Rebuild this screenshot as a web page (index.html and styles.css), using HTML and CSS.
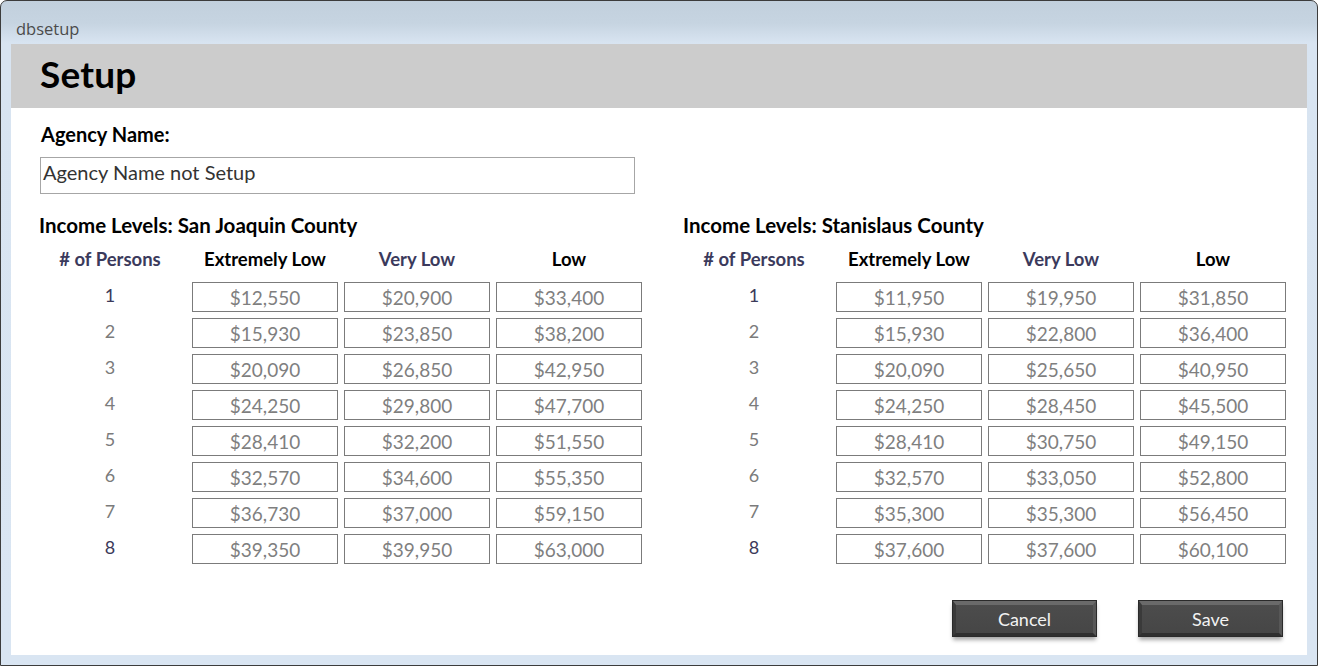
FILE: index.html
```
<!DOCTYPE html>
<html>
<head>
<meta charset="utf-8">
<link rel="stylesheet" href="styles.css">
</head>
<body>
<div class="window">
  <div class="titlebar">dbsetup</div>
  <div class="client">
    <div class="header"><h1 class="title">Setup</h1></div>
    <div class="content">
      <div class="label">Agency Name:</div>
      <div class="agency-input">Agency Name not Setup</div>
      <div class="sections">
        <div class="section">
          <div class="section-title">Income Levels: San Joaquin County</div>
          <div class="grid">
            <div class="colhead dim">#&nbsp;of Persons</div>
            <div class="colhead">Extremely Low</div>
            <div class="colhead dim">Very Low</div>
            <div class="colhead">Low</div>

            <div class="num dark">1</div><div class="cell">$12,550</div><div class="cell">$20,900</div><div class="cell">$33,400</div>
            <div class="num">2</div><div class="cell">$15,930</div><div class="cell">$23,850</div><div class="cell">$38,200</div>
            <div class="num">3</div><div class="cell">$20,090</div><div class="cell">$26,850</div><div class="cell">$42,950</div>
            <div class="num">4</div><div class="cell">$24,250</div><div class="cell">$29,800</div><div class="cell">$47,700</div>
            <div class="num">5</div><div class="cell">$28,410</div><div class="cell">$32,200</div><div class="cell">$51,550</div>
            <div class="num">6</div><div class="cell">$32,570</div><div class="cell">$34,600</div><div class="cell">$55,350</div>
            <div class="num">7</div><div class="cell">$36,730</div><div class="cell">$37,000</div><div class="cell">$59,150</div>
            <div class="num dark">8</div><div class="cell">$39,350</div><div class="cell">$39,950</div><div class="cell">$63,000</div>
          </div>
        </div>
        <div class="section">
          <div class="section-title">Income Levels: Stanislaus County</div>
          <div class="grid">
            <div class="colhead dim">#&nbsp;of Persons</div>
            <div class="colhead">Extremely Low</div>
            <div class="colhead dim">Very Low</div>
            <div class="colhead">Low</div>

            <div class="num dark">1</div><div class="cell">$11,950</div><div class="cell">$19,950</div><div class="cell">$31,850</div>
            <div class="num">2</div><div class="cell">$15,930</div><div class="cell">$22,800</div><div class="cell">$36,400</div>
            <div class="num">3</div><div class="cell">$20,090</div><div class="cell">$25,650</div><div class="cell">$40,950</div>
            <div class="num">4</div><div class="cell">$24,250</div><div class="cell">$28,450</div><div class="cell">$45,500</div>
            <div class="num">5</div><div class="cell">$28,410</div><div class="cell">$30,750</div><div class="cell">$49,150</div>
            <div class="num">6</div><div class="cell">$32,570</div><div class="cell">$33,050</div><div class="cell">$52,800</div>
            <div class="num">7</div><div class="cell">$35,300</div><div class="cell">$35,300</div><div class="cell">$56,450</div>
            <div class="num dark">8</div><div class="cell">$37,600</div><div class="cell">$37,600</div><div class="cell">$60,100</div>
          </div>
        </div>
      </div>
      <div class="buttons">
        <button class="btn">Cancel</button>
        <button class="btn">Save</button>
      </div>
    </div>
  </div>
</div>
</body>
</html>
```
FILE: styles.css
```
* { box-sizing: border-box; }
html, body { margin: 0; padding: 0; background: #ffffff; }
body { width: 1318px; height: 666px; overflow: hidden; font-family: Lato, "Open Sans", sans-serif; }

.window {
  width: 1318px;
  height: 666px;
  border: 1px solid #3c3c3c;
  border-radius: 7px 7px 0 0;
  background: linear-gradient(to bottom, #c2d0dd 0px, #c6d4e1 22px, #d8e4f1 42px, #d9e5f2 100%);
  padding: 0 10px 10px 10px;
  display: flex;
  flex-direction: column;
}

.titlebar {
  height: 43px;
  padding: 17px 0 0 5px;
  font-family: "Open Sans", sans-serif;
  font-size: 16.5px;
  line-height: 22px;
  color: #4b4b4b;
}

.client {
  flex: 1;
  background: #ffffff;
  display: flex;
  flex-direction: column;
}

.header {
  height: 64px;
  background: #cccccc;
  padding: 0 0 0 29px;
  display: flex;
  align-items: center;
}

.title {
  margin: 0;
  font-size: 37px;
  font-weight: 700;
  color: #000;
  line-height: 40px;
  padding-bottom: 4px;
  letter-spacing: 0.2px;
}

.content {
  flex: 1;
  padding: 13px 24px 0 29px;
  display: flex;
  flex-direction: column;
}

.label {
  font-size: 20px;
  font-weight: 700;
  line-height: 26px;
  color: #000;
  padding-left: 1px;
}

.agency-input {
  margin-top: 10px;
  width: 595px;
  height: 37px;
  border: 1px solid #a6a6a6;
  font-size: 20px;
  line-height: 28px;
  padding: 0 0 0 2px;
  color: #333333;
}

.sections {
  margin-top: 18px;
  display: flex;
  gap: 44px;
}

.section { width: 600px; }

.section-title {
  font-size: 20.5px;
  font-weight: 700;
  line-height: 26px;
  color: #000;
  margin-left: -1px;
}

.grid {
  margin-top: 7px;
  display: grid;
  grid-template-columns: 146px 146px 146px 146px;
  column-gap: 6px;
  row-gap: 6px;
  grid-auto-rows: 30px;
}

.colhead {
  font-size: 18.5px;
  font-weight: 700;
  text-align: center;
  line-height: 28px;
  color: #000;
  margin-bottom: -4px;
}
.colhead.dim { color: #3b3a5c; }
.grid > .colhead:first-child { padding-right: 6px; }

.num {
  font-size: 18px;
  text-align: center;
  line-height: 28px;
  padding-right: 6px;
  color: #7b7b7b;
}
.num.dark { color: #3b3a5a; }

.cell {
  border: 1px solid #7b7b7b;
  font-size: 19px;
  line-height: 28px;
  text-align: center;
  color: #7f7f7f;
  padding-top: 1px;
  margin-top: 1px;
  margin-bottom: -1px;
}

.buttons {
  margin-top: 38px;
  display: flex;
  justify-content: flex-end;
  gap: 43px;
  padding-right: 1px;
}

.btn {
  width: 143px;
  height: 35px;
  font-family: Lato, "Open Sans", sans-serif;
  font-size: 18px;
  color: #f2f2f2;
  background: linear-gradient(to bottom, #4c4c4c 0px, #464646 100%);
  border-style: solid;
  border-width: 4px 3px 3px 3px;
  border-color: #6a6a6a #575757 #2f2f2f #3a3a3a;
  box-shadow: 0 0 0 1px #2a2a2a, 0 4px 4px rgba(0,0,0,0.35);
  padding: 0 0 0 0;
  cursor: default;
}
```
